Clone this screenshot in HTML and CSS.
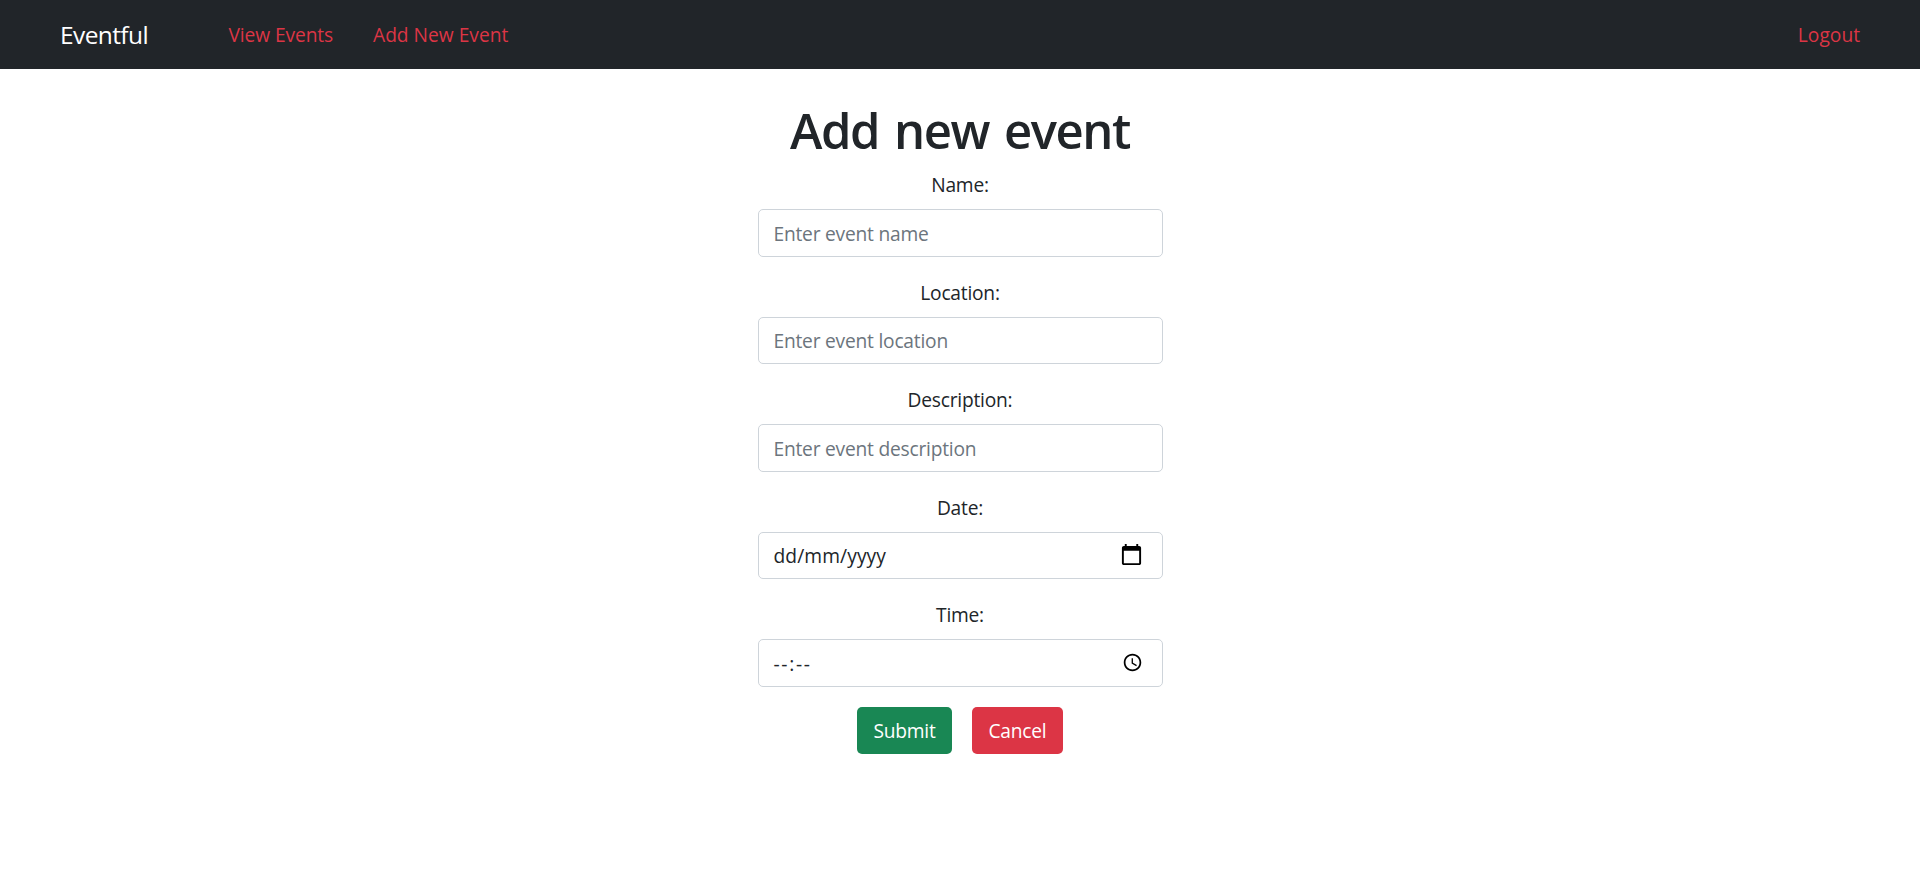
FILE: index.html
```html
<!DOCTYPE html>
<html lang="en">
<head>
<meta charset="utf-8">
<title>Eventful</title>
<link rel="stylesheet" href="styles.css">
</head>
<body>
<nav class="navbar">
  <a class="brand" href="#">Eventful</a>
  <div class="nav-links">
    <a class="nav-link view" href="#">View Events</a>
    <a class="nav-link add" href="#">Add New Event</a>
  </div>
  <a class="nav-link logout" href="#">Logout</a>
</nav>
<main class="page">
  <h1 class="title"><span>Add new event</span></h1>
  <form class="form">
    <div class="group">
      <label class="label" for="name"><span>Name:</span></label>
      <input class="control" id="name" type="text" placeholder="Enter event name">
    </div>
    <div class="group">
      <label class="label" for="location"><span>Location:</span></label>
      <input class="control" id="location" type="text" placeholder="Enter event location">
    </div>
    <div class="group">
      <label class="label" for="description"><span>Description:</span></label>
      <input class="control" id="description" type="text" placeholder="Enter event description">
    </div>
    <div class="group">
      <div class="label"><span>Date:</span></div>
      <div class="control picker">
        <span class="date-text">dd/mm/yyyy</span>
        <svg class="icon-date" viewBox="0 0 24 24"><path d="M20 3h-1V1h-2v2H7V1H5v2H4c-1.1 0-2 .9-2 2v16c0 1.1.9 2 2 2h16c1.1 0 2-.9 2-2V5c0-1.1-.9-2-2-2zm0 18H4V8h16v13z"/></svg>
      </div>
    </div>
    <div class="group">
      <div class="label"><span>Time:</span></div>
      <div class="control picker">
        <span class="time-text">--:--</span>
        <svg class="icon-time" viewBox="0 0 24 24"><path d="M11.99 2C6.47 2 2 6.48 2 12s4.47 10 9.99 10C17.52 22 22 17.52 22 12S17.52 2 11.99 2zM12 20c-4.42 0-8-3.58-8-8s3.58-8 8-8 8 3.58 8 8-3.58 8-8 8z"/><path d="M12.5 7H11v6l5.25 3.15.75-1.23-4.5-2.67z"/></svg>
      </div>
    </div>
    <div class="actions">
      <button class="btn submit" type="button">Submit</button>
      <button class="btn cancel" type="button">Cancel</button>
    </div>
  </form>
</main>
</body>
</html>
```
FILE: styles.css
```css
* { box-sizing: border-box; }

body {
  margin: 0;
  background: #fff;
  color: #212529;
  font-family: "Open Sans", "Noto Sans", sans-serif;
  font-size: 19.2px;
  line-height: 30px;
  letter-spacing: -0.22px;
}

.navbar {
  display: flex;
  align-items: center;
  height: 69px;
  padding: 0 60px;
  background: #212529;
}

.navbar a { text-decoration: none; white-space: nowrap; }

.brand {
  width: 168.5px;
  color: #fff;
  font-size: 24.5px;
  letter-spacing: -0.6px;
  padding-top: 1px;
}

.nav-links { display: flex; flex: 1; }

.nav-link { color: #dc3545; letter-spacing: 0; }

.view { width: 144.5px; letter-spacing: -0.1px; }

.page {
  display: flex;
  flex-direction: column;
  align-items: center;
}

.title {
  margin: 31px 0 9px;
  font-size: 49px;
  line-height: 60px;
  font-weight: 600;
  letter-spacing: -1.4px;
  word-spacing: 3.5px;
  white-space: nowrap;
}

.form { width: 405px; }

.group { margin-bottom: 20px; }

.label {
  display: block;
  height: 30px;
  padding-top: 1px;
  margin-bottom: 10px;
  text-align: center;
}

.control {
  display: block;
  width: 100%;
  height: 47.5px;
  padding: 1px 15px 0;
  border: 1px solid #ced4da;
  border-radius: 5px;
  background: #fff;
  color: #212529;
  font: inherit;
  letter-spacing: inherit;
}

.control::placeholder { color: #6c757d; opacity: 1; }

.picker {
  display: flex;
  align-items: center;
  justify-content: space-between;
}

.date-text { letter-spacing: 0.1px; }

.time-text { padding-top: 2px; letter-spacing: 1.7px; }

.icon-date { width: 23px; height: 23px; margin: -3px 4px 0 0; }

.icon-time { width: 21px; height: 21px; margin: -2px 4px 0 0; }

.actions {
  display: flex;
  justify-content: center;
  gap: 20px;
}

.btn {
  height: 47px;
  padding: 2px 0 0;
  border: 0;
  border-radius: 5px;
  color: #fff;
  font: inherit;
  letter-spacing: inherit;
}

.submit { width: 95px; background: #198754; }

.cancel { width: 91px; background: #dc3545; }
```
